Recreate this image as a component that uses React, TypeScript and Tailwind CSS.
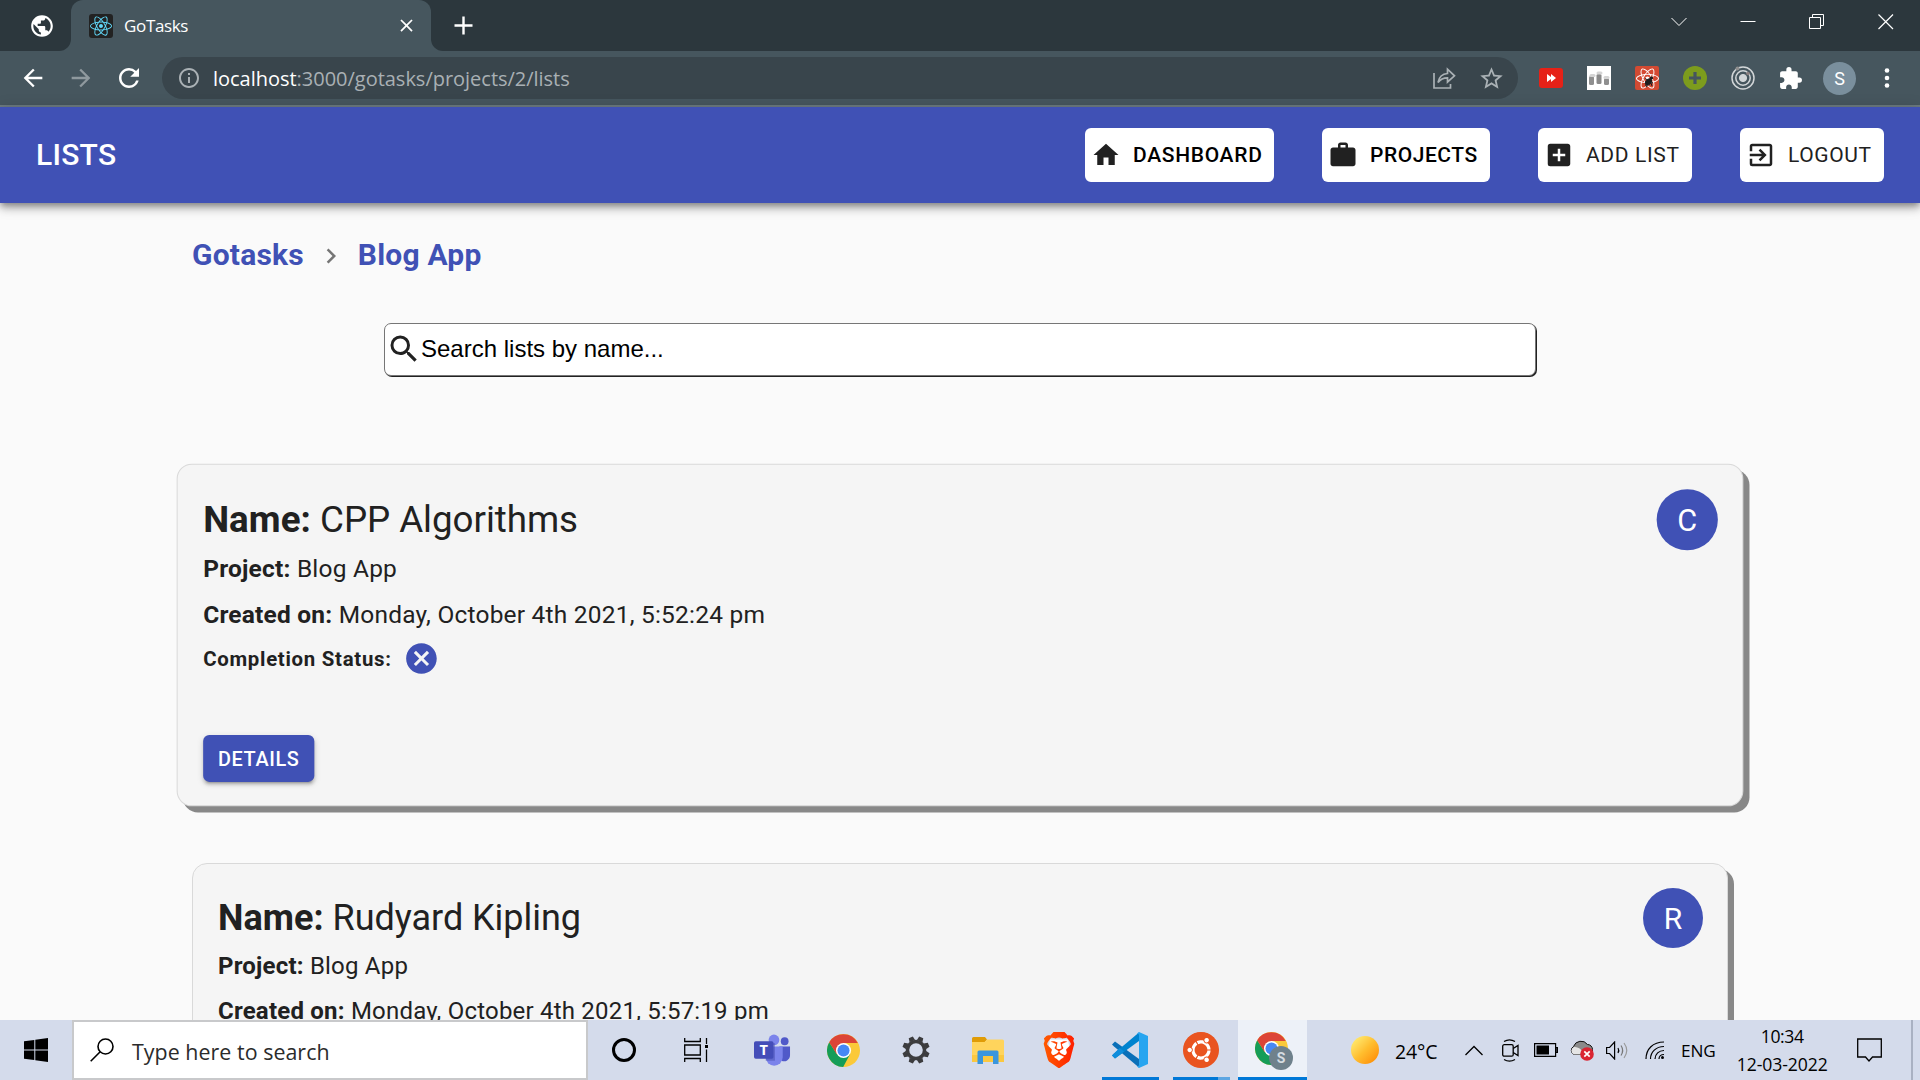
import React from "react";
import {
  MdAddBox,
  MdArrowBack,
  MdArrowForward,
  MdCancel,
  MdClose,
  MdExitToApp,
  MdExtension,
  MdHome,
  MdInfoOutline,
  MdNavigateNext,
  MdPublic,
  MdRefresh,
  MdSearch,
  MdStarBorder,
  MdWork,
} from "react-icons/md";
import { FaReact, FaUbuntu } from "react-icons/fa";
import { SiBrave } from "react-icons/si";

function TabStrip() {
  return (
    <div className="flex h-[51px] bg-[#2c373d]">
      <div className="flex w-[71px] bg-[#46565e]">
        <div className="flex flex-1 items-center rounded-br-[12px] bg-[#2c373d] pl-[29px]">
          <MdPublic className="size-[26px] text-white" />
        </div>
      </div>
      <div className="flex w-[360px] bg-[#2c373d]">
        <div className="flex flex-1 items-center rounded-t-[12px] bg-[#46565e] pr-[14px] pl-[18px]">
          <div className="flex size-6 items-center justify-center rounded-[3px] bg-[#222]">
            <FaReact className="size-[22px] text-[#61dafb]" />
          </div>
          <span className="ml-[11px] flex-1 text-[17px] tracking-[-0.35px] text-white">GoTasks</span>
          <MdClose className="size-[21px] text-white" />
        </div>
      </div>
      <div className="flex w-[46px] bg-[#46565e]">
        <div className="flex flex-1 items-center rounded-bl-[12px] bg-[#2c373d] pl-[23px]">
          <svg className="size-[19px]" viewBox="0 0 19 19" stroke="#fff" strokeWidth="2.4">
            <path d="M9.5 .5v18M.5 9.5h18" />
          </svg>
        </div>
      </div>
      <div className="flex flex-1 items-start justify-end gap-[53px] pt-[14px] pr-[26px]">
        <svg className="size-4" viewBox="0 0 16 16" fill="none" stroke="#fff">
          <path d="M.5 4 8 11.5 15.5 4" />
        </svg>
        <svg className="size-4" viewBox="0 0 16 16" stroke="#fff">
          <path d="M.5 7.5h15" />
        </svg>
        <svg className="size-4" viewBox="0 0 16 16" fill="none" stroke="#fff">
          <path d="M.5 3.5h11v11H.5zM3.5 3.5v-3h11v11h-3" />
        </svg>
        <svg className="size-4" viewBox="0 0 16 16" stroke="#fff" strokeWidth="1.2">
          <path d="M.5.5l14.5 14.5M15 .5.5 15" />
        </svg>
      </div>
    </div>
  );
}

function Extensions() {
  return (
    <div className="flex items-center pl-[21px]">
      <div className="flex h-[20px] w-6 items-center justify-center rounded-[3px] bg-[#e62117]">
        <svg className="h-2 w-[9px]" viewBox="0 0 9 8" fill="#fff">
          <path d="M0 0l4 3V0l5 4-5 4V5L0 8z" />
        </svg>
      </div>
      <svg className="ml-6 size-6" viewBox="0 0 24 24">
        <path fill="#fff" d="M0 0h24v24H0z" />
        <rect x="2" y="10" width="5" height="9" rx="1.500" fill="#8f8f8f" />
        <rect x="9.500" y="8" width="5" height="10" rx="1.500" fill="#8a8a8a" />
        <rect x="17" y="12" width="5" height="7" rx="1.500" fill="#8f8f8f" />
        <rect x="2.500" y="8" width="6" height="3" rx="1.500" fill="#d5d5d5" />
        <rect x="9.500" y="5.500" width="6" height="3" rx="1.500" fill="#d5d5d5" />
        <rect x="16.500" y="10" width="6" height="3" rx="1.500" fill="#d5d5d5" />
      </svg>
      <div className="ml-6 grid size-6 place-items-center rounded-[2px] bg-[#d34a32]">
        <FaReact className="col-start-1 row-start-1 size-[23px] text-white" />
        <svg className="col-start-1 row-start-1 size-6" viewBox="0 0 24 24" fill="#1d1d1d" stroke="#1d1d1d">
          <ellipse cx="13.500" cy="16" rx="2.400" ry="3.600" transform="rotate(40 13.500 16)" />
          <circle cx="16.500" cy="12" r="1.200" />
          <path d="M10 12.500l8 4.500M12 21l-1.500-2M17 20l-1-3M10 16l3-1" />
        </svg>
      </div>
      <svg className="ml-6 size-6" viewBox="0 0 24 24">
        <circle cx="12" cy="12" r="12" fill="#7d9c1d" />
        <path d="M12 6v12M6 12h12" stroke="#46565e" strokeWidth="3.200" />
      </svg>
      <svg className="ml-6 size-6" viewBox="0 0 24 24" fill="none" stroke="#d2d6d8">
        <circle cx="12" cy="12" r="11" strokeWidth="1.500" />
        <circle cx="12" cy="12" r="7.200" strokeWidth="1.500" />
        <circle cx="12" cy="12" r="3.600" fill="#d2d6d8" />
        <circle cx="6.500" cy="2.500" r="2" fill="#8e8e8e" stroke="none" />
        <circle cx="17" cy="7.500" r="1.800" fill="#8b7f7f" stroke="none" />
      </svg>
      <MdExtension className="ml-[23px] size-[25px] text-white" />
      <div className="ml-5 flex size-[33px] items-center justify-center rounded-full bg-[#7a8f9d] font-['Roboto'] text-[18px] text-white">
        S
      </div>
      <svg className="ml-[28px] h-5 w-[6px]" viewBox="0 0 6 20" fill="#fff">
        <circle cx="3" cy="2.500" r="2.300" />
        <circle cx="3" cy="10" r="2.300" />
        <circle cx="3" cy="17.500" r="2.300" />
      </svg>
    </div>
  );
}

function Toolbar() {
  return (
    <div className="flex h-[56px] items-center border-b-2 border-[#6d7b81] bg-[#46565e]">
      <MdArrowBack className="ml-[19px] size-[28px] text-white" />
      <MdArrowForward className="ml-[20px] size-[28px] text-[#8f999e]" />
      <MdRefresh className="mr-px ml-[19px] size-[30px] text-white" />
      <div className="ml-[17px] flex h-[42px] w-[1356px] items-center rounded-full bg-[#39454c] pr-[13px] pl-[15px]">
        <MdInfoOutline className="size-[24px] text-[#aab1b5]" />
        <div className="ml-[12px] flex-1 pt-[2px] text-[20px] leading-[40px] tracking-[-0.02px] text-[#a9b0b4]">
          <span className="text-white">localhost</span>:3000/gotasks/projects/2/lists
        </div>
        <svg className="mr-[22px] size-6" viewBox="0 0 24 24" fill="none" stroke="#aab1b5" strokeWidth="1.700">
          <path d="M2 7v15h16.500v-4" />
          <path d="M6 16.500C7 11 10.500 7.800 15.500 7.500V3.200L22.500 9.800 15.500 16v-4.200C11.500 11.800 8.500 13 6 16.500z" />
        </svg>
        <MdStarBorder className="size-[27px] text-[#aab1b5]" />
      </div>
      <Extensions />
    </div>
  );
}

const navButton =
  "flex h-[54px] items-center rounded-[6px] bg-white pl-[6px] text-[21px] whitespace-nowrap";

function Header() {
  return (
    <header className="relative z-10 flex h-24 items-center justify-between bg-[#4051b5] px-9 font-['Roboto'] shadow-[0px_3px_6px_-1px_rgba(0,0,0,0.3),0px_6px_8px_0px_rgba(0,0,0,0.18),0px_2px_15px_0px_rgba(0,0,0,0.15)]">
      <h1 className="pb-[2px] text-[30px] font-medium tracking-[0.25px] text-white">LISTS</h1>
      <nav className="flex gap-12">
        <a className={`${navButton} w-[189px] font-medium tracking-[0.68px] text-black`}>
          <MdHome className="mr-3 size-[30px] text-[#212121]" />
          <span className="pt-[2px]">DASHBOARD</span>
        </a>
        <a className={`${navButton} w-[168px] font-medium tracking-[0.55px] text-black`}>
          <MdWork className="mr-3 size-[30px] text-[#212121]" />
          <span className="pt-[2px]">PROJECTS</span>
        </a>
        <a className={`${navButton} w-[154px] tracking-[0.64px] text-[#212121]`}>
          <MdAddBox className="mr-3 size-[30px]" />
          <span className="pt-[2px]">ADD LIST</span>
        </a>
        <a className={`${navButton} w-[144px] tracking-[0.6px] text-[#212121]`}>
          <MdExitToApp className="mr-3 size-[30px]" />
          <span className="pt-[2px]">LOGOUT</span>
        </a>
      </nav>
    </header>
  );
}

type ListItem = { name: string; project: string; created: string; initial: string; active?: boolean };

const lists: ListItem[] = [
  { name: "CPP Algorithms", project: "Blog App", created: "Monday, October 4th 2021, 5:52:24 pm", initial: "C", active: true },
  { name: "Rudyard Kipling", project: "Blog App", created: "Monday, October 4th 2021, 5:57:19 pm", initial: "R" },
];

function ListCard({ item }: { item: ListItem }) {
  return (
    <article
      className={`flex h-[336px] shrink-0 items-start justify-between rounded-[15px] border border-[#d9d9d9] bg-[#f5f5f5] p-6 text-[#212121] shadow-[6px_6px_0_0_#888] ${item.active ? "scale-[1.02]" : ""}`}
    >
      <div className="flex flex-col items-start pt-[6px] pl-px">
        <h2 className="text-[36px] leading-[48px] tracking-[-0.04px]">
          <b className="tracking-[0.05px]">Name:</b> {item.name}
        </h2>
        <p className="mt-[6px] text-[24px] leading-9 tracking-[0.21px]">
          <b>Project:</b> {item.project}
        </p>
        <p className="mt-[9px] text-[24px] leading-9 tracking-[0.21px]">
          <b>Created on:</b> {item.created}
        </p>
        <div className="mt-[7px] flex h-9 items-center">
          <b className="text-[20px] tracking-[0.7px]">Completion Status:</b>
          <MdCancel className="ml-[11px] size-9 text-[#4051b5]" />
        </div>
        <button className="mt-[57px] h-[46px] w-[109px] rounded-[6px] bg-[#4051b5] pt-px text-[19.5px] font-medium tracking-[0.6px] text-white shadow-[0px_4px_2px_-3px_rgba(0,0,0,0.2),0px_3px_3px_0px_rgba(0,0,0,0.14),0px_2px_7px_0px_rgba(0,0,0,0.12)]">
          DETAILS
        </button>
      </div>
      <div className="flex size-[60px] items-center justify-center rounded-full bg-[#4051b5] text-[30px] text-white">
        {item.initial}
      </div>
    </article>
  );
}

function Page() {
  return (
    <main className="flex min-h-0 flex-1 flex-col overflow-hidden bg-[#fafafa] px-48 font-['Roboto']">
      <nav className="mt-[32px] flex h-[42px] items-center text-[30px] font-bold text-[#4051b5]">
        <span className="pb-[3px] tracking-[0.2px]">Gotasks</span>
        <MdNavigateNext className="mr-[12px] ml-[12px] size-[30px] text-[#757575]" />
        <span className="pb-[3px] tracking-[0.2px]">Blog App</span>
      </nav>
      <div className="mx-auto mt-[46px] flex h-[53px] w-[1152px] shrink-0 items-center rounded-[7px] border border-[#767676] bg-white pb-[2px] pl-px font-['Liberation_Sans'] text-[24px] text-black shadow-[1px_1px_0_0_#222]">
        <MdSearch className="size-9 text-[#212121]" />
        <span className="-ml-px">Search lists by name...</span>
      </div>
      <section className="mt-[91px] flex flex-col gap-[60px]">
        {lists.map((item) => (
          <ListCard key={item.name} item={item} />
        ))}
      </section>
    </main>
  );
}

function ChromeLogo({ className }: { className: string }) {
  return (
    <svg className={className} viewBox="0 0 48 48">
      <circle cx="24" cy="24" r="24" fill="#fbc939" />
      <path fill="#159d58" d="M3.200 12A24 24 0 0 0 23.500 48L33.500 29.500 24 24 14.500 29.500z" />
      <path fill="#dc4437" d="M3.200 12A24 24 0 0 1 44.800 13H24L14 29z" />
      <circle cx="24" cy="24" r="11" fill="#fff" />
      <circle cx="24" cy="24" r="8.800" fill="#4688f4" />
    </svg>
  );
}

function GearIcon() {
  return (
    <svg className="size-7" viewBox="-14 -14 28 28" fill="#3c3c3e">
      <path
        fillRule="evenodd"
        d="M0-10.300a10.300 10.300 0 1 0 0 20.600a10.300 10.300 0 1 0 0-20.600zM0-6.800a6.800 6.800 0 1 1 0 13.600a6.800 6.800 0 1 1 0-13.600z"
      />
      {[22.5, 67.5, 112.5, 157.5, 202.5, 247.5, 292.5, 337.5].map((angle) => (
        <path key={angle} d="M-3-9.500-2.200-13.700H2.200L3-9.500z" transform={`rotate(${angle})`} />
      ))}
    </svg>
  );
}

function TaskbarApps() {
  return (
    <>
      <div className="flex w-[72px] items-center justify-center">
        <div className="size-6 rounded-full border-[3px] border-black" />
      </div>
      <div className="flex w-[72px] items-center justify-center">
        <svg className="size-6" viewBox="0 0 24 24" fill="none" stroke="#000" strokeWidth="1.300">
          <path d="M.7 0v3.500h15.600V0M.7 24v-3.500h15.600V24M.7 7h15.600v10H.7zM22.500 0v6M22.500 11.500V24" />
          <path d="M21 7h3v3h-3z" fill="#000" stroke="none" />
        </svg>
      </div>
      <div className="flex w-[78px] items-center justify-center pl-[2px]">
        <svg className="h-8 w-[37px]" viewBox="0 0 38 32">
          <circle cx="31.500" cy="7" r="4" fill="#5059c9" />
          <path fill="#5059c9" d="M26 12.500h11v9a6 6 0 0 1-9 5.200z" />
          <circle cx="20.500" cy="5.700" r="5.500" fill="#7b83eb" />
          <path fill="#7b83eb" d="M12 12.500h17.500v10.800a8.700 8.700 0 0 1-17.500 0z" />
          <path fill="#3d45a5" opacity=".45" d="M12 9h9.500v18H12z" />
          <rect y="7" width="20" height="18" rx="1.800" fill="#444db8" />
          <text x="10" y="21.500" textAnchor="middle" fill="#fff" fontFamily="Open Sans" fontWeight="700" fontSize="15">T</text>
        </svg>
      </div>
      <div className="flex w-[68px] items-center justify-center pr-px">
        <ChromeLogo className="size-[33px]" />
      </div>
      <div className="flex w-[76px] items-center justify-center">
        <GearIcon />
      </div>
      <div className="flex w-[68px] items-center justify-center">
        <svg className="h-[27px] w-8" viewBox="0 0 32 27">
          <path fill="#e09c07" d="M0 1.500A1.500 1.500 0 0 1 1.500 0H13l2 2.500L13 5H0z" />
          <path fill="#ffd45c" d="M0 5h12.500l2.500-2.500h15.500A1.500 1.500 0 0 1 32 4v21H0z" />
          <path fill="#fbc83f" d="M0 18h32v7H0z" />
          <path fill="#3a96dd" d="M5.500 15a1.500 1.500 0 0 1 1.500-1.500h18a1.500 1.500 0 0 1 1.500 1.500v12H21v-8h-10v8H5.500z" />
        </svg>
      </div>
      <div className="flex w-[74px] items-center justify-center">
        <svg className="size-9" viewBox="0 0 24 24">
          <defs>
            <linearGradient id="brave">
              <stop offset="0" stopColor="#ff5a00" />
              <stop offset="1" stopColor="#ff2000" />
            </linearGradient>
          </defs>
          <path fill="#fff" d="M6 5h12l1 6-3 7-4 3-4-3-3-7z" />
          <SiBrave size={24} fill="url(#brave)" />
        </svg>
      </div>
      <div className="flex w-[68px] flex-col items-center justify-end">
        <svg className="mb-[9px] size-9" viewBox="0 0 36 36">
          <path fill="#0a6fb8" d="M0 12.500 3 9.500 27 27v8.500L2 14.500z" />
          <path fill="#0083cf" d="M0 23.500 3 26.500 27 9V.5L2 21.500z" />
          <path fill="#0f8ddb" d="M0 23.500 3 26.500 12 19.500 7.500 16z" />
          <path fill="#27a5f0" d="M27 0l9 4v28l-9 4-2-1.500 2-1V2.500L25 1.500z" />
        </svg>
        <div className="h-[3px] w-[57px] bg-[#0078d7]" />
      </div>
      <div className="flex w-[74px] flex-col items-center justify-end">
        <div className="mb-[9px] rounded-full bg-[radial-gradient(circle,white_62%,#e95420_64%)]">
          <FaUbuntu className="size-9 text-[#e95420]" />
        </div>
        <div className="flex h-[3px] w-[57px] bg-[#5ea6e2]">
          <div className="w-[45px] bg-[#0078d7]" />
        </div>
      </div>
      <div className="flex w-[69px] flex-col items-center justify-end bg-[#edf1f8]">
        <div className="relative mb-[12px] pr-[2px]">
          <ChromeLogo className="size-[33px]" />
          <div className="absolute top-[14px] left-[14px] flex size-6 items-center justify-center rounded-full bg-[#6f818c] font-['Roboto'] text-[14px] font-bold text-[#d5dce1]">
            S
          </div>
        </div>
        <div className="h-[3px] w-full bg-[#0078d7]" />
      </div>
    </>
  );
}

function Tray() {
  return (
    <div className="flex flex-1 items-center text-black">
      <div className="ml-[44px] size-7 rounded-full bg-linear-to-br from-[#ffe566] from-15% via-[#ffbe2e] to-[#fd8f00] to-90%" />
      <span className="ml-[16px] w-[44px] pt-[3px] text-[19.5px] leading-[24px] tracking-[-0.1px]">24°C</span>
      <svg className="ml-[26px] h-[11px] w-[18px]" viewBox="0 0 18 11" fill="none" stroke="#000" strokeWidth="1.300">
        <path d="M.5 10 9 1.500 17.500 10" />
      </svg>
      <svg className="ml-[19px] h-[23px] w-[17px]" viewBox="0 0 17 23" fill="none" stroke="#000" strokeWidth="1.300">
        <rect x=".7" y="5.700" width="10.500" height="11.500" rx="1.500" />
        <path d="M11.200 9.500 16 6.500v10l-4.800-3M2 2.500Q7.500-.8 13 2.500M2 20.500q5.500 3.300 11 0" />
      </svg>
      <svg className="ml-[15px] h-[14px] w-6" viewBox="0 0 24 14">
        <path d="M.6.6h21v12.800h-21zM22 4.500h1.400v5H22z" fill="none" stroke="#000" strokeWidth="1.200" />
        <path d="M2.500 2.500H15v9H2.500z" />
      </svg>
      <svg className="ml-[11px] h-[22px] w-[25px]" viewBox="0 0 25 22">
        <path fill="#8a8a8a" stroke="#111" d="M5 15.500A4.500 4.500 0 0 1 4.500 7.500 8 8 0 0 1 18.500 5.500a5 5 0 0 1 5 5v5z" />
        <path fill="#e5e5e5" d="M5 15.500a4 4 0 0 1 0-7.500c4-.5 6 2 9 4v3.500z" />
        <circle cx="18" cy="15" r="6.800" fill="#da2532" />
        <path d="M15.300 12.300l5.400 5.400M20.700 12.300l-5.400 5.400" stroke="#fff" strokeWidth="1.700" />
      </svg>
      <svg className="ml-[12px] h-[19px] w-[23px]" viewBox="0 0 23 19" fill="none" stroke="#000" strokeWidth="1.200">
        <path d="M.6 6.500h3l5-5.500v17l-5-5.500h-3z" />
        <path d="M12 7q1.500 2.500 0 5" />
        <path stroke="#777" d="M15 4.500q3.300 5 0 10" />
        <path stroke="#999" d="M18 2q5.500 7.500 0 15" />
      </svg>
      <svg className="ml-[16px] h-[19px] w-5" viewBox="0 0 20 19" fill="none" stroke="#000" strokeWidth="1.200">
        <path d="M1 18C1 8 8 1 19 1M5.500 18C5.500 11 11 5.500 19 5.500M10 18c0-5 4-8.500 9-8.500" />
        <path d="M14 18c0-2.500 2-4.500 5-4.500" />
        <circle cx="17.500" cy="16.500" r="1.500" fill="#000" stroke="none" />
      </svg>
      <span className="ml-[16px] pt-[2px] text-[17.2px] tracking-[-0.1px]">ENG</span>
      <div className="ml-[20px] flex w-[93px] flex-col items-center text-[17.6px] leading-[28px] tracking-[-0.1px]">
        <span className="tracking-[-0.4px]">10:34</span>
        <span>12-03-2022</span>
      </div>
      <svg className="ml-[28px] size-[25px]" viewBox="0 0 25 25" fill="none" stroke="#000" strokeWidth="1.300">
        <path d="M.7 1h23.600v18H15.500L12 23l-3.500-4H.7z" />
      </svg>
      <div className="ml-[29px] h-full w-[2px] bg-[#a9b1c2]" />
    </div>
  );
}

function Taskbar() {
  return (
    <footer className="flex h-[60px] shrink-0 bg-[#d4dbeb]">
      <div className="flex w-[72px] items-center justify-center">
        <svg className="size-6" viewBox="0 0 24 24">
          <path d="M0 3.300 10.300 1.900V11.400H0zM11.300 1.700 24 0v11.400H11.300zM0 12.400h10.300v9.700L0 20.700zM11.300 12.400H24V24l-12.700-1.700z" />
        </svg>
      </div>
      <div className="flex w-[516px] items-center border-2 border-[#c8c9cb] bg-white pl-4">
        <svg className="size-6" viewBox="0 0 24 24" fill="none" stroke="#000" strokeWidth="1.600">
          <circle cx="15.500" cy="8.500" r="7.500" />
          <path d="M10.200 13.800.7 23.300" />
        </svg>
        <span className="ml-[18px] pt-[3px] text-[21.400px] leading-[30px] tracking-[0.04px] text-[#2b2b2b]">
          Type here to search
        </span>
      </div>
      <TaskbarApps />
      <Tray />
    </footer>
  );
}

export default function App() {
  return (
    <div className="flex h-[1080px] w-[1920px] flex-col overflow-hidden font-['Open_Sans',sans-serif]">
      <TabStrip />
      <Toolbar />
      <Header />
      <Page />
      <Taskbar />
    </div>
  );
}
